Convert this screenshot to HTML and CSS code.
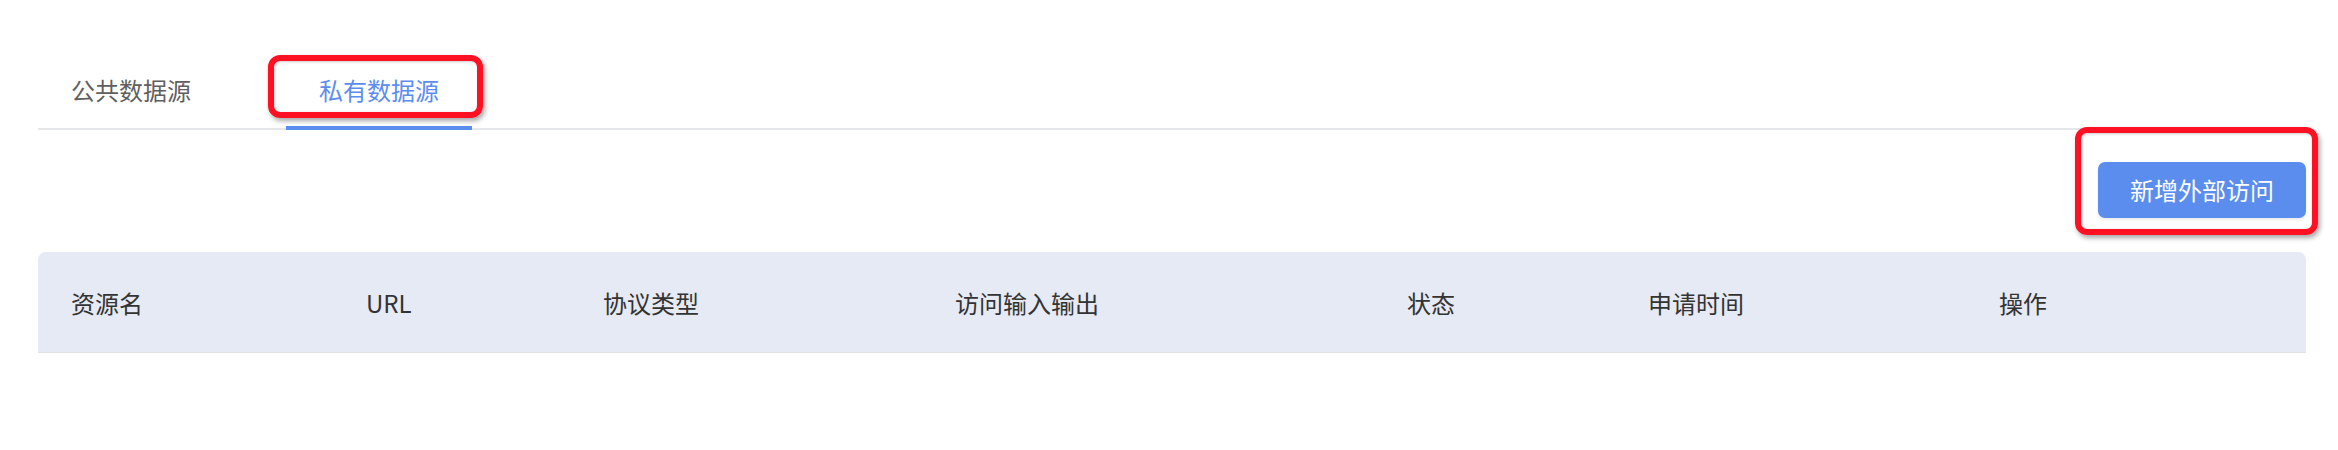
FILE: index.html
```html
<!DOCTYPE html>
<html lang="zh-CN">
<head>
<meta charset="utf-8">
<title>数据源</title>
<link rel="stylesheet" href="styles.css">
</head>
<body>
<div class="page">
  <div class="tabs">
    <div class="tab">公共数据源</div>
    <div class="tab active">私有数据源</div>
    <div class="mark mark-tab"></div>
  </div>
  <div class="toolbar">
    <button class="btn">新增外部访问</button>
    <div class="mark mark-btn"></div>
  </div>
  <div class="table-head">
    <div class="th">资源名</div>
    <div class="th">URL</div>
    <div class="th">协议类型</div>
    <div class="th">访问输入输出</div>
    <div class="th">状态</div>
    <div class="th">申请时间</div>
    <div class="th">操作</div>
  </div>
</div>
</body>
</html>
```

FILE: styles.css
```css
* { box-sizing: border-box; }
html, body {
  margin: 0;
  padding: 0;
  background: #fff;
  font-family: "Noto Sans CJK SC", "Noto Sans", sans-serif;
}
.page {
  padding: 60px 32px 0 38px;
}
.tabs {
  position: relative;
  display: flex;
  gap: 62px;
  border-bottom: 2px solid #e4e6ea;
}
.tab {
  position: relative;
  height: 68px;
  line-height: 60px;
  padding: 0 33px;
  font-size: 24px;
  color: #5f5f5f;
  white-space: nowrap;
}
.tab.active { color: #5b8def; }
.tab.active::after {
  content: "";
  position: absolute;
  left: 0;
  right: 0;
  bottom: -2px;
  height: 4px;
  background: #5b8def;
}
.mark {
  position: absolute;
  border: 6px solid #ff1022;
  border-radius: 12px;
  box-shadow: 2px 3px 5px rgba(0,0,0,0.35), inset 1px 1px 3px rgba(0,0,0,0.2);
  pointer-events: none;
}
.mark-tab {
  left: 230px;
  top: -5px;
  width: 215px;
  height: 63px;
}
.toolbar {
  position: relative;
  display: flex;
  justify-content: flex-end;
  padding-top: 32px;
}
.btn {
  height: 56px;
  padding: 0 32px;
  border: none;
  border-radius: 7px;
  background: #5b8def;
  color: #fff;
  font-family: inherit;
  font-size: 24px;
  line-height: 56px;
  box-shadow: 0 2px 3px rgba(0,0,0,0.08);
}
.mark-btn {
  right: -12px;
  top: -3px;
  width: 243px;
  height: 108px;
}
.table-head {
  margin-top: 34px;
  height: 101px;
  display: grid;
  grid-template-columns: 295px 237px 352px 452px 241px 351px 1fr;
  align-items: center;
  background: #e6eaf5;
  border-radius: 8px 8px 0 0;
  border-bottom: 1px solid #e2e3e6;
}
.th {
  padding-left: 33px;
  font-size: 24px;
  color: #333;
  white-space: nowrap;
}
```
